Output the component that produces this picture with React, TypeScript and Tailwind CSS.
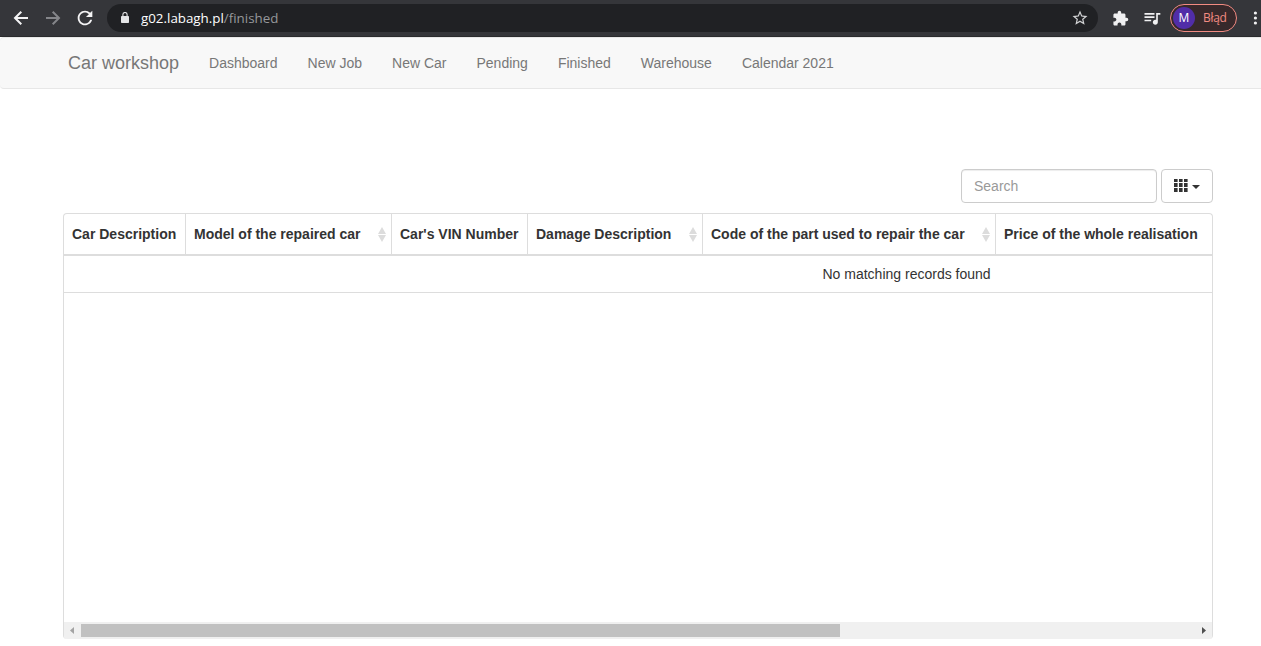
import type { ReactNode } from "react";
import { MdExtension, MdQueueMusic, MdRefresh, MdStarOutline } from "react-icons/md";

const links = ["Dashboard", "New Job", "New Car", "Pending", "Finished", "Warehouse", "Calendar 2021"];

const gridColumns = [0, 5, 10];
const gridRows = [
  { y: 0, h: 3 },
  { y: 4, h: 4 },
  { y: 9, h: 4 },
];

function BrowserBar() {
  return (
    <header className="flex h-[37px] shrink-0 items-center border-b border-[#2a2b2d] bg-[#35363a] font-['Open_Sans',sans-serif] text-white">
      <svg viewBox="0 0 16 16" className="ml-[13px] size-4 shrink-0" fill="none" stroke="#f4f4f5" strokeWidth="2">
        <path d="M15 8H2.500M8.300 1.700L2 8L8.300 14.300" />
      </svg>
      <svg viewBox="0 0 16 16" className="ml-4 size-4 shrink-0" fill="none" stroke="#85868a" strokeWidth="2">
        <path d="M1 8h12.500M7.700 1.700L14 8L7.700 14.300" />
      </svg>
      <MdRefresh className="ml-[13px] size-[22px] shrink-0 text-[#f4f4f5]" />
      <div className="ml-[11px] flex h-7 w-[991px] shrink-0 items-center rounded-full bg-[#202124]">
        <svg viewBox="0 0 8 11" className="mb-[1px] ml-[14px] h-[11px] w-2 shrink-0">
          <path d="M1.900 5V2.600a2.100 2.100 0 0 1 4.200 0V5" fill="none" stroke="#e4e5e7" strokeWidth="1.100" />
          <rect y="4" width="8" height="7" rx="0.800" fill="#e4e5e7" />
        </svg>
        <div className="ml-3 flex pt-[2px] text-[13.35px] leading-none">
          <span>g02.labagh.pl</span>
          <span className="text-[#96989b]">/finished</span>
        </div>
        <MdStarOutline className="mr-[9px] ml-auto size-[18px] text-[#d2d3d5]" />
      </div>
      <MdExtension className="ml-[14px] size-[17px] shrink-0 text-[#f0f0f1]" />
      <MdQueueMusic className="ml-[13px] size-5 shrink-0 text-[#f0f0f1]" />
      <div className="ml-2 flex h-7 w-[67px] shrink-0 items-center rounded-full border border-[#f28b82] bg-[#37292b] pl-[2px]">
        <span className="flex size-[22px] items-center justify-center rounded-full bg-[#512da8] text-[12px] leading-none">M</span>
        <span className="ml-2 text-[12px] leading-none tracking-[-0.3px] text-[#f28b82]">Błąd</span>
      </div>
      <svg viewBox="0 0 4 14" className="ml-4 h-[14px] w-1 shrink-0" fill="#f0f0f1">
        <circle cx="2.400" cy="2" r="1.600" />
        <circle cx="2.400" cy="7" r="1.600" />
        <circle cx="2.400" cy="12" r="1.600" />
      </svg>
    </header>
  );
}

function SortIcon() {
  return (
    <svg viewBox="0 0 8 15" className="mr-[5.5px] ml-auto h-[15px] w-2 shrink-0" fill="#dcdcdc">
      <path d="M4 0L8 7H0zM0 8h8l-4 7z" />
    </svg>
  );
}

function HeadCell({ width, sort, children }: { width: string; sort?: boolean; children: ReactNode }) {
  return (
    <div className={`${width} flex h-full shrink-0 items-center pl-2 whitespace-nowrap`}>
      {children}
      {sort && <SortIcon />}
    </div>
  );
}

export default function App() {
  return (
    <div className="flex h-[646px] flex-col overflow-hidden bg-white font-['Liberation_Sans',Arial,sans-serif] text-[14px] leading-5 text-[#333]">
      <BrowserBar />
      <nav className="flex h-[52px] shrink-0 items-center rounded-l-[4px] border-y border-[#e7e7e7] bg-[#f8f8f8] pl-[68px] text-[#777]">
        <a className="mr-[30px] text-[18px]">Car workshop</a>
        <div className="flex gap-[30px]">
          {links.map((l) => (
            <a key={l}>{l}</a>
          ))}
        </div>
      </nav>
      <main className="mt-20 mr-12 ml-[63px]">
        <div className="flex justify-end gap-1">
          <input
            placeholder="Search"
            className="h-[34px] w-[196px] rounded-[4px] border border-[#ccc] px-3 shadow-[inset_0_1px_1px_rgba(0,0,0,0.075)] outline-none placeholder:text-[#999]"
          />
          <button className="flex h-[34px] w-[52px] items-center rounded-[4px] border border-[#ccc] pl-3">
            <svg viewBox="0 0 14 14" className="size-[14px]" fill="#333">
              {gridRows.map(({ y, h }) =>
                gridColumns.map((x) => <rect key={`${x}-${y}`} x={x} y={y} width="3.6" height={h} />),
              )}
            </svg>
            <svg viewBox="0 0 8 4" className="mt-[2px] ml-1 h-1 w-2" fill="#333">
              <path d="M0 0h8L4 4z" />
            </svg>
          </button>
        </div>
        <section className="mt-[10px] flex h-[426px] flex-col overflow-hidden rounded-[4px] border border-b-0 border-[#ddd]">
          <div className="flex h-[42px] shrink-0 divide-x divide-[#ddd] border-b-2 border-[#ddd] font-bold">
            <HeadCell width="w-[122px]">Car Description</HeadCell>
            <HeadCell width="w-[206px]" sort>Model of the repaired car</HeadCell>
            <HeadCell width="w-[136px]">Car's VIN Number</HeadCell>
            <HeadCell width="w-[175px]" sort>Damage Description</HeadCell>
            <HeadCell width="w-[293px]" sort>Code of the part used to repair the car</HeadCell>
            <HeadCell width="w-[216px]">Price of the whole realisation</HeadCell>
          </div>
          <div className="flex h-[37px] shrink-0 items-center border-b border-[#ddd]">
            <span className="ml-[758.5px]">No matching records found</span>
          </div>
          <div className="mt-auto flex h-[17px] items-center bg-[#f0f0f0]">
            <svg viewBox="0 0 17 17" className="size-[17px]" fill="#a3a3a3">
              <path d="M10 5v7L6 8.500z" />
            </svg>
            <div className="h-[13px] w-[759px] bg-[#c1c1c1]" />
            <svg viewBox="0 0 17 17" className="ml-auto size-[17px]" fill="#505050">
              <path d="M7 5v7l4-3.500z" />
            </svg>
          </div>
        </section>
      </main>
    </div>
  );
}
